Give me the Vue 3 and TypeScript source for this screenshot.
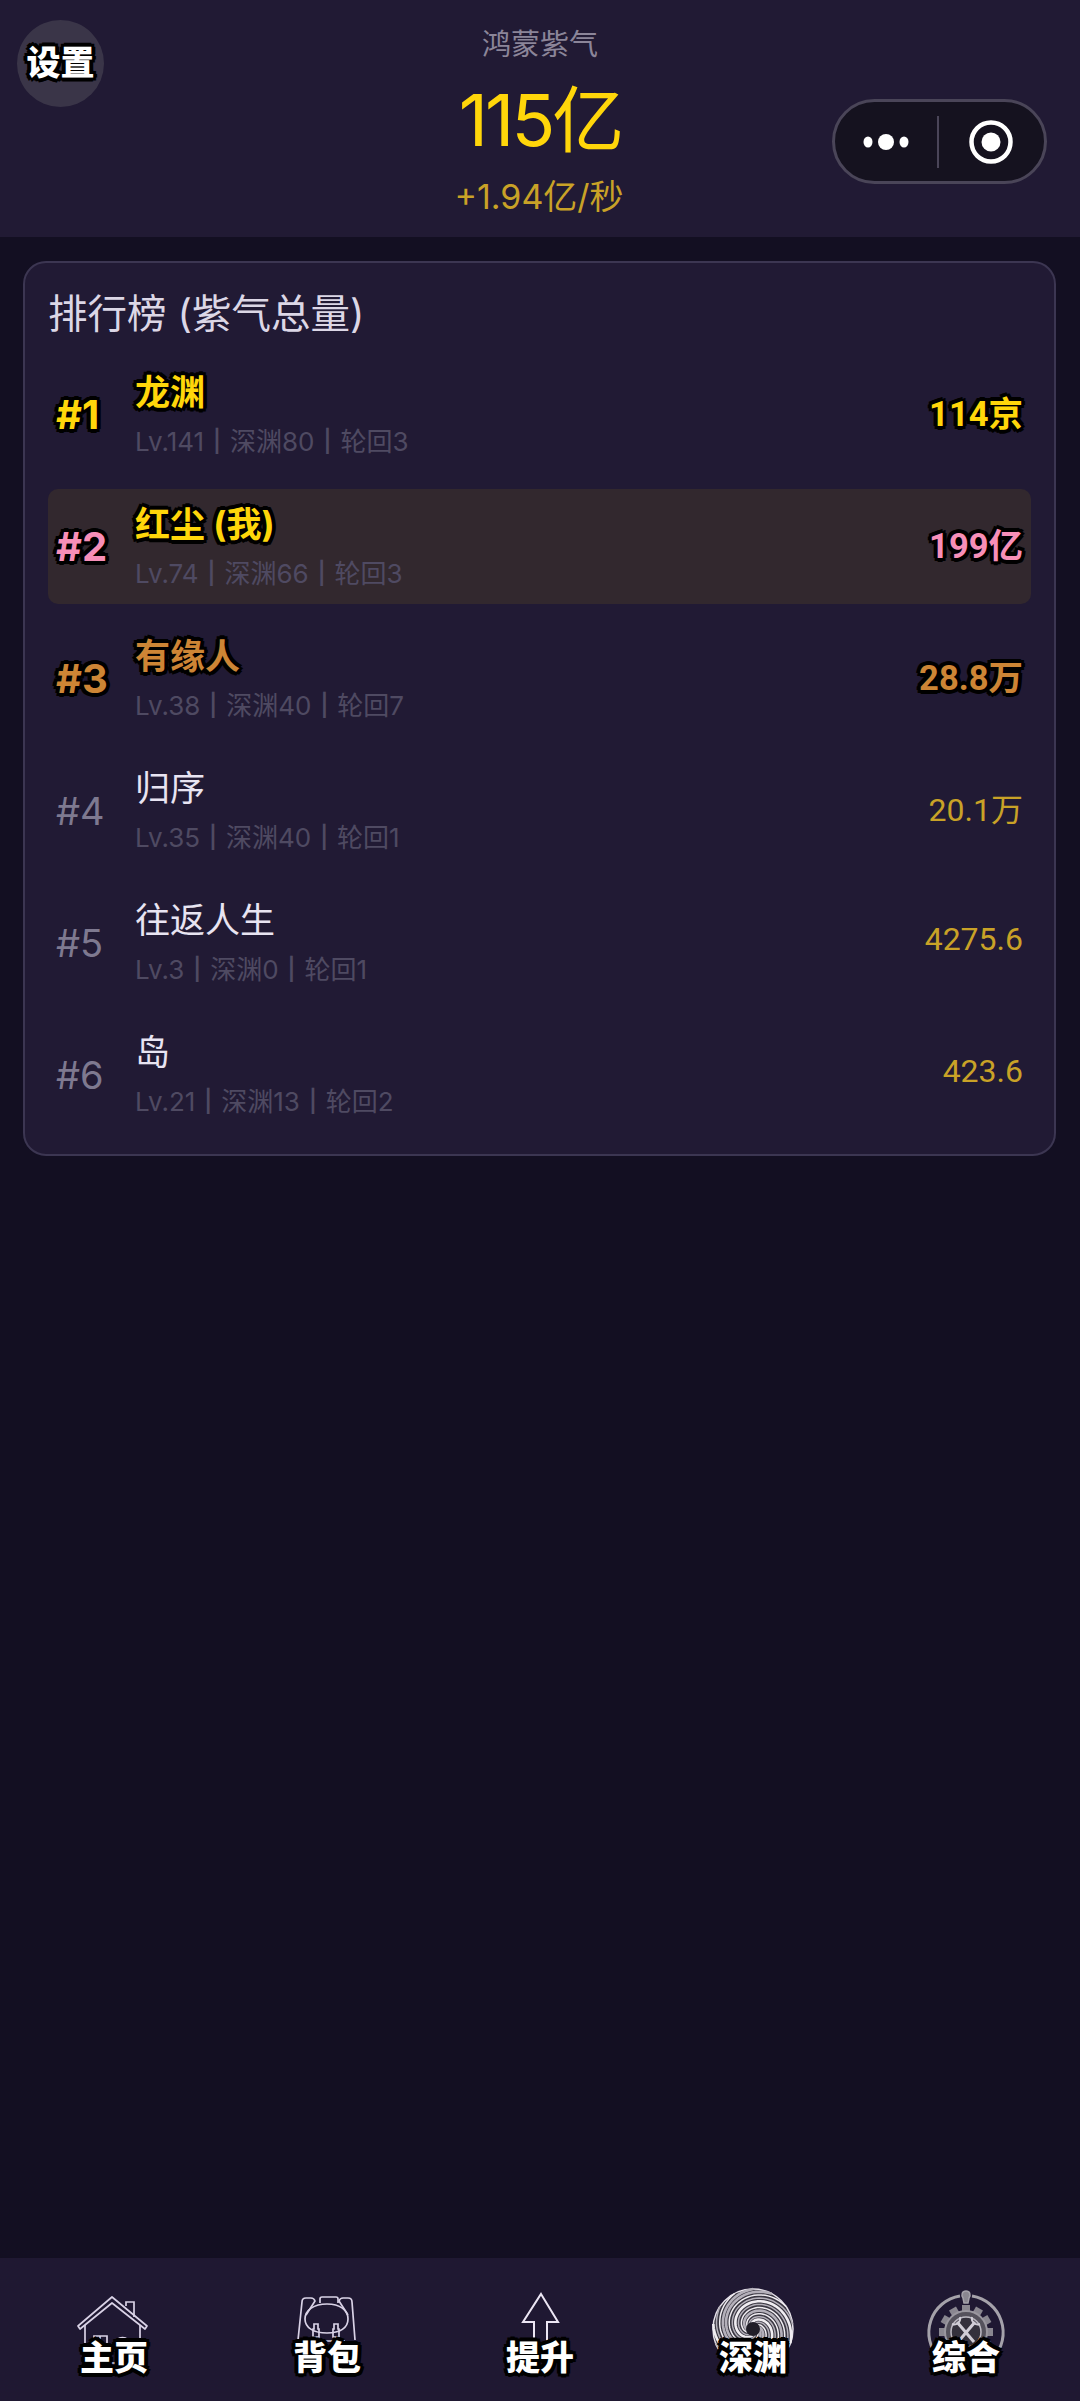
<script setup lang="ts">
interface Row {
  rank: number
  name: string
  info: string[]
  score: string
  me?: boolean
}

const rows: Row[] = [
  { rank: 1, name: '龙渊', info: ['Lv.141', '深渊80', '轮回3'], score: '114京' },
  { rank: 2, name: '红尘 (我)', info: ['Lv.74', '深渊66', '轮回3'], score: '199亿', me: true },
  { rank: 3, name: '有缘人', info: ['Lv.38', '深渊40', '轮回7'], score: '28.8万' },
  { rank: 4, name: '归序', info: ['Lv.35', '深渊40', '轮回1'], score: '20.1万' },
  { rank: 5, name: '往返人生', info: ['Lv.3', '深渊0', '轮回1'], score: '4275.6' },
  { rank: 6, name: '岛', info: ['Lv.21', '深渊13', '轮回2'], score: '423.6' }
]

const tabs = [
  { key: 'home', label: '主页' },
  { key: 'bag', label: '背包' },
  { key: 'up', label: '提升' },
  { key: 'abyss', label: '深渊' },
  { key: 'misc', label: '综合' }
]

// swirl arms for the abyss icon
const swirl = Array.from({ length: 13 }, (_, arm) => {
  const start = (arm / 13) * Math.PI * 2
  let d = ''
  for (let i = 0; i <= 50; i++) {
    const t = i / 50
    const r = 5 + t * 35
    const a = start + t * 5.2
    d += `${i ? 'L' : 'M'}${(42 + r * Math.cos(a)).toFixed(1)} ${(42 + r * Math.sin(a)).toFixed(1)}`
  }
  return { d, width: arm % 3 === 0 ? 2.6 : 1.5, color: arm % 2 ? '#f0edf2' : '#b4b0ba' }
})

const gearTeeth = Array.from({ length: 12 }, (_, i) => i * 30)
</script>

<template>
  <div class="page">
    <header class="top">
      <button class="settings"><span>设置</span></button>
      <div class="top-label">鸿蒙紫气</div>
      <div class="top-total">115亿</div>
      <div class="top-rate">+1.94亿/秒</div>
      <div class="capsule">
        <svg class="cap-dots" viewBox="0 0 46 16" width="46" height="16">
          <ellipse cx="5" cy="8" rx="4.5" ry="5.5" />
          <circle cx="23" cy="8" r="8" />
          <ellipse cx="41" cy="8" rx="4.5" ry="5.5" />
        </svg>
        <span class="cap-line"></span>
        <svg class="cap-target" viewBox="0 0 46 46" width="46" height="46">
          <circle cx="23" cy="23" r="19.5" fill="none" stroke="#fff" stroke-width="4.5" />
          <circle cx="23" cy="23" r="9.5" fill="#fff" />
        </svg>
      </div>
    </header>

    <main class="main">
      <section class="card">
        <h2 class="card-title">排行榜 (紫气总量)</h2>
        <ul class="list">
          <li
            v-for="row in rows"
            :key="row.rank"
            class="row"
            :class="[`rank-${row.rank}`, { me: row.me }]"
          >
            <span class="rank">#{{ row.rank }}</span>
            <div class="who">
              <div class="name">{{ row.name }}</div>
              <div class="info">
                <template v-for="(part, i) in row.info" :key="part">
                  <span v-if="i" class="sep">|</span>{{ part }}
                </template>
              </div>
            </div>
            <span class="score">{{ row.score }}</span>
          </li>
        </ul>
      </section>
    </main>

    <nav class="tabs">
      <div v-for="tab in tabs" :key="tab.key" class="tab">
        <svg v-if="tab.key === 'home'" class="icon" viewBox="0 0 80 80" fill="none" stroke="#d9d2e6" stroke-width="1.7">
          <path d="M4 35 38 6 73 35 71 38 38 12 6 38Z" stroke-linejoin="round" />
          <path d="M52 15V11H60V26" />
          <path d="M11 34V72H66V34" />
          <path d="M20 58V45H33V58M26 45V58" />
          <path d="M41 60V54a7.5 7.5 0 0 1 15 0V60" />
        </svg>
        <svg v-else-if="tab.key === 'bag'" class="icon" viewBox="0 0 80 80" fill="none" stroke="#d9d2e6" stroke-width="1.7">
          <path d="M33 12V8Q33 6 35 6H49Q51 6 51 8V12" />
          <path d="M11 49 15 11Q15 7 19 7H24Q27 7 28 10L19 24" stroke-linejoin="round" />
          <path d="M68 49 65 11Q65 7 61 7H56Q53 7 52 10L61 24" stroke-linejoin="round" />
          <path d="M40 13C27 13 18 19 18 28 18 37 27 42 40 42 53 42 61 37 61 28 61 19 53 13 40 13Z" />
          <path d="M27 33H31V38H32V46H26V38H27Z" />
          <path d="M47 33H51V38H52V46H46V38H47Z" />
          <path d="M22 50H58" />
        </svg>
        <svg v-else-if="tab.key === 'up'" class="icon" viewBox="0 0 80 80" fill="none" stroke="#ece6f4" stroke-width="2">
          <path d="M41 3 58 31H47V70H34V31H23Z" stroke-linejoin="miter" />
        </svg>
        <svg v-else-if="tab.key === 'abyss'" class="icon icon-abyss" viewBox="0 0 84 84" fill="none">
          <circle cx="42" cy="42" r="40" fill="#3a3742" stroke="#e6e2ea" stroke-width="1.5" />
          <path
            v-for="(arm, i) in swirl"
            :key="i"
            :d="arm.d"
            :stroke="arm.color"
            :stroke-width="arm.width"
          />
          <circle cx="42" cy="42" r="7" fill="#211e28" />
        </svg>
        <svg v-else class="icon icon-misc" viewBox="0 0 84 84" fill="none" stroke="#a5a2aa">
          <path d="M15 69A37 37 0 0 1 36 7M48 7A37 37 0 0 1 69 69" stroke-width="3" />
          <path d="M42 2C38 2 37 6 39 9L40 14H44L45 9C47 6 46 2 42 2Z" fill="#8a8790" stroke-width="1.5" />
          <rect
            v-for="deg in gearTeeth"
            :key="deg"
            x="38"
            y="16"
            width="8"
            height="8"
            fill="#8a8790"
            stroke="none"
            :transform="`rotate(${deg} 42 43)`"
          />
          <circle cx="42" cy="43" r="21" fill="#55525c" stroke="#9a979f" stroke-width="2" />
          <circle cx="42" cy="43" r="15" fill="#34313c" stroke="#bcb9c2" stroke-width="1.5" />
          <path d="M33 33 50 53M51 33 34 53" stroke="#d0cdd6" stroke-width="3" />
          <path d="M28 35a6 6 0 0 0 8-7M56 35a6 6 0 0 1-8-7" stroke="#d0cdd6" stroke-width="2" />
        </svg>
        <span class="tab-label">{{ tab.label }}</span>
      </div>
    </nav>
  </div>
</template>

<style scoped>
.page {
  --outline: -3px -3px 0 #000, 3px -3px 0 #000, -3px 3px 0 #000, 3px 3px 0 #000, 0 -4px 0 #000, 0 4px 0 #000, -4px 0 0 #000, 4px 0 0 #000;
  display: flex;
  flex-direction: column;
  height: 2401px;
  background: #130f22;
  font-family: Inter, Roboto, "Noto Sans CJK SC", sans-serif;
  color: #e8e4f2;
}

.top {
  position: relative;
  height: 237px;
  flex: none;
  box-sizing: border-box;
  padding-top: 24px;
  background: #211a34;
  text-align: center;
}
.settings {
  position: absolute;
  left: 17px;
  top: 20px;
  width: 87px;
  height: 87px;
  padding: 0 0 6px;
  border: 0;
  border-radius: 50%;
  background: #3a3548;
  color: #fff;
  font: 900 34px "Noto Sans CJK SC", sans-serif;
  text-shadow: var(--outline);
}
.top-label {
  font-size: 29px;
  line-height: 42px;
  color: #8b8599;
}
.top-total {
  margin-top: 10px;
  font-size: 72px;
  letter-spacing: -3px;
  line-height: 88px;
  color: #ffd60a;
}
.top-rate {
  margin-top: 11px;
  margin-left: -2px;
  font-size: 34px;
  line-height: 44px;
  color: #c9a227;
}
.capsule {
  position: absolute;
  left: 832px;
  top: 99px;
  width: 215px;
  height: 85px;
  box-sizing: border-box;
  display: flex;
  align-items: center;
  border: 3px solid #4a4558;
  border-radius: 43px;
  background: #15121f;
}
.cap-dots {
  margin-left: 28px;
  fill: #fff;
}
.cap-line {
  width: 2px;
  height: 52px;
  margin: 0 29px 0 28px;
  background: #4a4558;
}

.main {
  flex: 1;
  padding: 24px 24px 0 23px;
}
.card {
  box-sizing: border-box;
  height: 895px;
  padding: 29px 23px 0;
  border: 2px solid #3c3652;
  border-radius: 23px;
  background: #211a34;
}
.card-title {
  margin: 0 0 21px;
  font-size: 39.5px;
  font-weight: 400;
  line-height: 44px;
  color: #dcd7e6;
}
.list {
  display: flex;
  flex-direction: column;
  gap: 17px;
  margin: 0;
  padding: 0;
  list-style: none;
}
.row {
  display: flex;
  align-items: center;
  height: 115px;
  box-sizing: border-box;
  padding: 0 8px 0 8px;
  border-radius: 10px;
}
.row.me {
  background: #32282e;
}
.rank {
  width: 79px;
  font-size: 38px;
  color: #7e7990;
}
.who {
  flex: 1;
  padding-top: 2px;
}
.name {
  font-size: 35px;
  line-height: 44px;
  color: #e8e4f2;
}
.info {
  margin-top: 8px;
  font-size: 26px;
  line-height: 38px;
  white-space: nowrap;
  color: #4f4a62;
}
.sep {
  margin: 0 9px;
  font-size: 22px;
  font-weight: 600;
  vertical-align: 2px;
}
.score {
  margin-bottom: 8px;
  font-family: Roboto, "Noto Sans CJK SC", sans-serif;
  font-size: 32px;
  color: #c9a227;
}

.rank-1 .rank,
.rank-2 .rank,
.rank-3 .rank,
.rank-1 .name,
.rank-2 .name,
.rank-3 .name,
.rank-1 .score,
.rank-2 .score,
.rank-3 .score {
  font-weight: 700;
  text-shadow: var(--outline);
}
.rank-1 .rank,
.rank-2 .rank,
.rank-3 .rank {
  font-size: 40px;
}
.rank-1 .score,
.rank-2 .score,
.rank-3 .score {
  font-size: 34.5px;
}
.rank-1 .rank,
.rank-1 .name,
.rank-1 .score,
.rank-2 .name {
  color: #ffd60a;
}
.rank-2 .rank,
.rank-2 .score {
  color: #f78fb8;
}
.rank-3 .rank,
.rank-3 .name,
.rank-3 .score {
  color: #cd8535;
}

.tabs {
  display: grid;
  grid-template-columns: repeat(5, 213px);
  justify-content: center;
  height: 143px;
  flex: none;
  background: #1f1832;
}
.tab {
  position: relative;
  display: flex;
  flex-direction: column;
  align-items: center;
}
.icon {
  width: 80px;
  height: 80px;
  margin-top: 33px;
}
.icon-abyss {
  width: 84px;
  height: 84px;
  margin-top: 29px;
}
.icon-misc {
  width: 84px;
  height: 84px;
  margin-top: 31px;
}
.tab-label {
  position: absolute;
  top: 76px;
  font-family: "Noto Sans CJK SC", sans-serif;
  font-size: 34px;
  font-weight: 900;
  line-height: 44px;
  color: #fff;
  text-shadow: var(--outline);
}
</style>

<style>
html,
body {
  background: #130f22;
}
</style>
